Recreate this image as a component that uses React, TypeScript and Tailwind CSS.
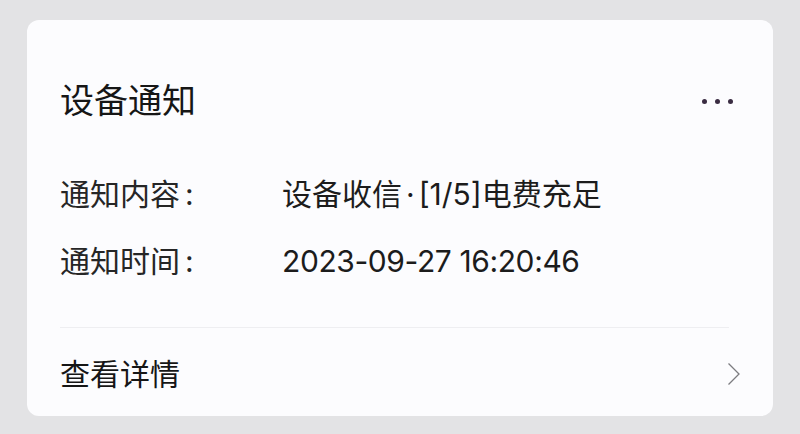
import React from 'react';

const font = { fontFamily: 'Inter, "Noto Sans CJK SC", "Noto Sans", sans-serif' };

const App = () => {
  return (
    <div className="w-[800px] h-[434px] bg-[#e3e3e5] pt-[20px] px-[27px]" style={font}>
      <div className="h-[396px] rounded-[12px] bg-[#fcfcfe] pl-[33px] pr-[32px]">
        {/* header */}
        <div className="pt-[56px] h-[106px] flex items-center justify-between">
          <span className="text-[34px] leading-none text-[#161616]">设备通知</span>
          <div className="flex items-center gap-[8px] mr-[8px]">
            <span className="w-[5px] h-[5px] rounded-full bg-[#3a2c42]" />
            <span className="w-[5px] h-[5px] rounded-full bg-[#3a2c42]" />
            <span className="w-[5px] h-[5px] rounded-full bg-[#3a2c42]" />
          </div>
        </div>

        {/* details */}
        <div className="mt-[48px] flex flex-col gap-[27px] text-[30px] leading-none text-[#1c1c1c]">
          <div className="h-[40px] flex items-center">
            <span className="w-[222px] shrink-0 text-[#262626]">
              通知内容<span className="ml-[5px]">:</span>
            </span>
            <span>
              设备收信<span className="mx-[4px]">·</span>[1/5]电费充足
            </span>
          </div>
          <div className="h-[40px] flex items-center">
            <span className="w-[222px] shrink-0 text-[#262626]">
              通知时间<span className="ml-[5px]">:</span>
            </span>
            <span className="tracking-[-0.4px]">2023-09-27 16:20:46</span>
          </div>
        </div>

        <div className="mt-[46px] h-px bg-[#eeeef1] mr-[12px]" />

        {/* footer */}
        <div className="mt-[26px] h-[40px] flex items-center justify-between">
          <span className="text-[30px] leading-none text-[#161616]">查看详情</span>
          <svg width="14" height="24" viewBox="0 0 14 24" fill="none">
            <path d="M1.5 1.5 L12 12 L1.5 22.5" stroke="#7c7c80" strokeWidth="1.3" />
          </svg>
        </div>
      </div>
    </div>
  );
};

export default App;
